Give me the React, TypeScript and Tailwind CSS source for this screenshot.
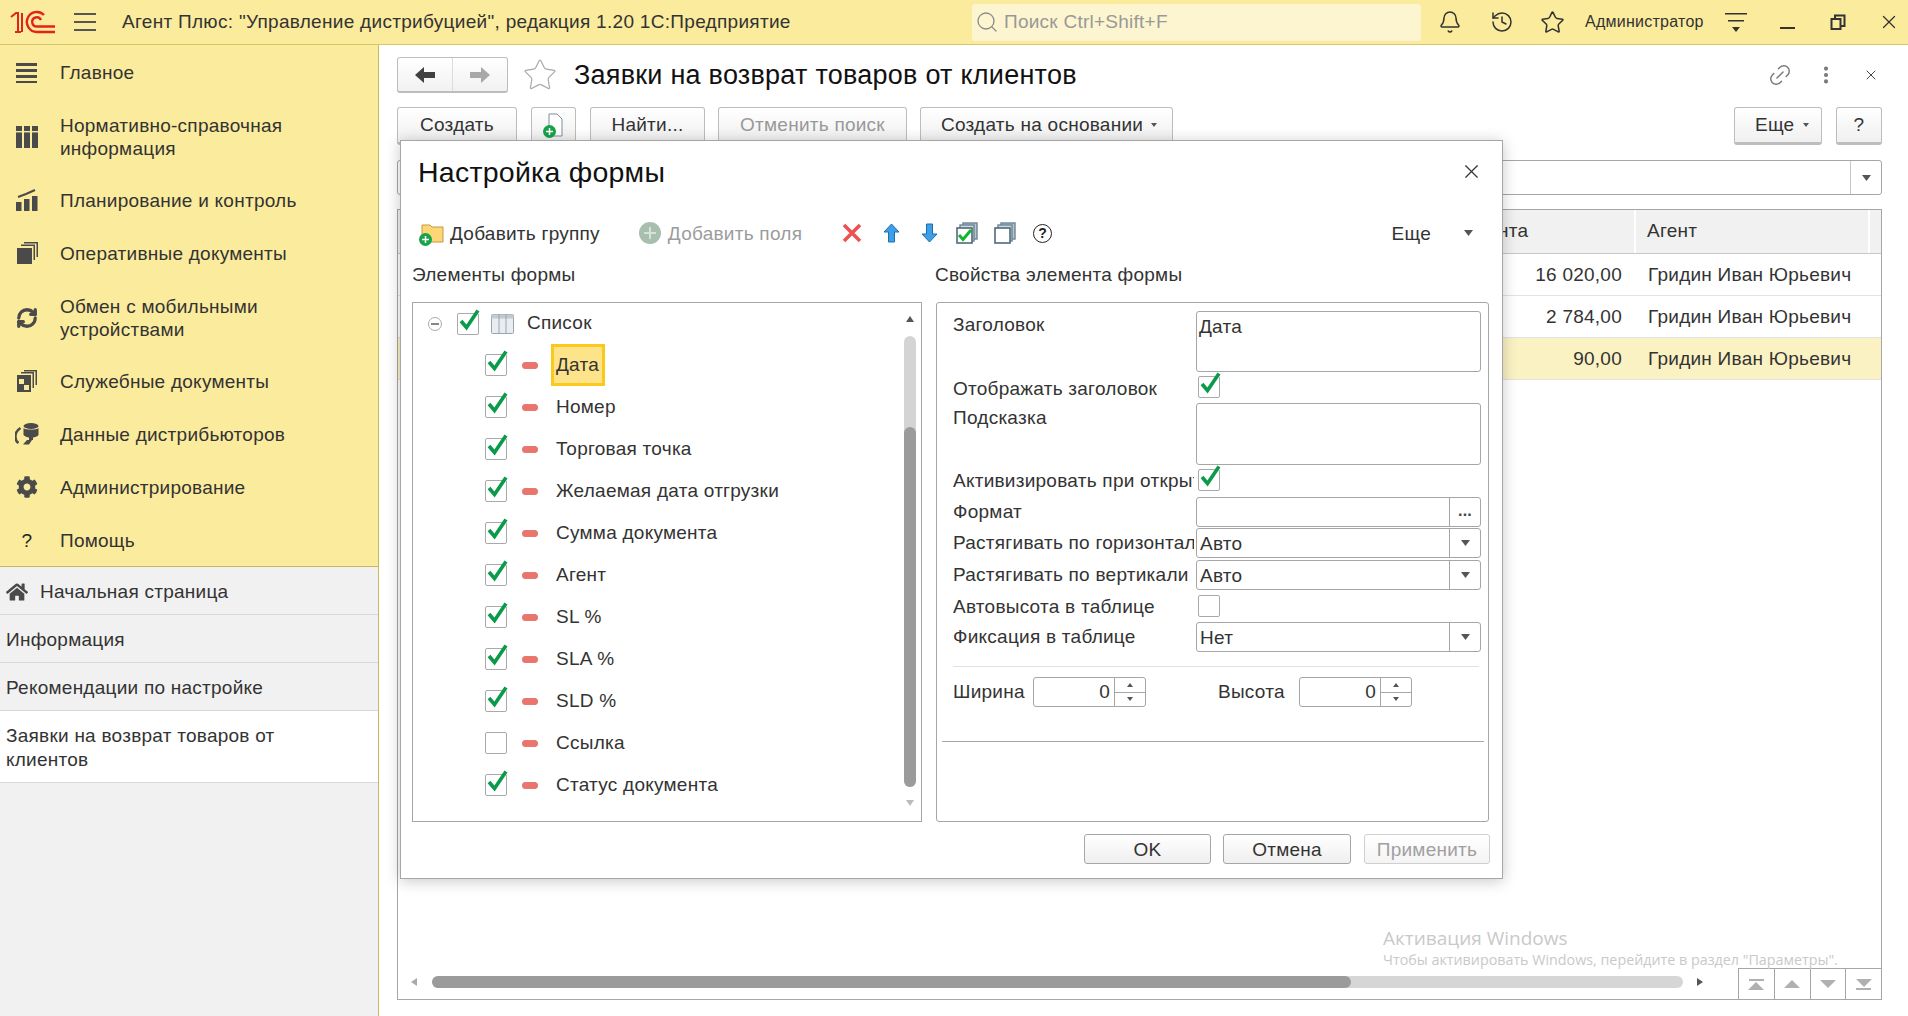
import { ReactNode } from 'react';
import { Bell, History, Star, X, Link2, EllipsisVertical, Search, RefreshCw } from 'lucide-react';
import { FaCog, FaHome } from 'react-icons/fa';

function Logo1C() {
    return (
        <svg width="46" height="24" viewBox="0 0 46 24" fill="none" stroke="#e2231a" strokeWidth="2.4">
            <path d="M1 7 L6 3 H8 V22 M5 22 H11" strokeWidth="2" />
            <path d="M12 3 V22" strokeWidth="2" />
            <path d="M45 22 H27 A10 10 0 1 1 34 5" />
            <path d="M45 16.5 H27 A4.6 4.6 0 1 1 31 10" />
        </svg>
    );
}

function MenuIcon({ name }: { name: string }) {
    const c = '#4a4a4a';
    if (name === 'main') {
        return (
            <svg width="22" height="22" viewBox="0 0 22 22" fill={c}>
                <rect x="0" y="2" width="21" height="3" />
                <rect x="0" y="8" width="21" height="3" />
                <rect x="0" y="14" width="21" height="3" />
                <rect x="0" y="20" width="21" height="2.5" />
            </svg>
        );
    }
    if (name === 'ref') {
        return (
            <svg width="22" height="22" viewBox="0 0 22 22" fill={c}>
                <rect x="0" y="0" width="6" height="22" />
                <rect x="8" y="0" width="6" height="22" />
                <rect x="16" y="0" width="6" height="22" />
                <rect x="0" y="5" width="22" height="1.4" fill="#faea9b" />
            </svg>
        );
    }
    if (name === 'plan') {
        return (
            <svg width="22" height="22" viewBox="0 0 22 22" fill={c}>
                <rect x="0" y="13" width="5.5" height="9" />
                <rect x="8" y="10" width="5.5" height="12" />
                <rect x="16" y="7" width="5.5" height="15" />
                <path d="M2 8 L10 5 L19 1" stroke={c} strokeWidth="2" fill="none" />
            </svg>
        );
    }
    if (name === 'docs') {
        return (
            <svg width="22" height="22" viewBox="0 0 22 22" fill={c}>
                <rect x="1" y="6" width="15" height="16" />
                <path d="M5 4 V2.5 H19 V18 H17.5 V4 Z" />
                <path d="M8 1.5 V0 H22 V15 H20.5 V1.5 Z" />
            </svg>
        );
    }
    if (name === 'sync') {
        return <RefreshCw size={22} color={c} strokeWidth={3.6} />;
    }
    if (name === 'service') {
        return (
            <svg width="20" height="22" viewBox="0 0 20 22" fill={c}>
                <rect x="0" y="5" width="14" height="17" />
                <rect x="2" y="9" width="5" height="5" fill="#faea9b" />
                <rect x="7" y="15" width="5" height="5" fill="#faea9b" />
                <path d="M4 3.5 V2 H17 V18 H15.5 V3.5 Z" />
                <path d="M7 1.5 V0 H20 V15 H18.5 V1.5 Z" />
            </svg>
        );
    }
    if (name === 'data') {
        return (
            <svg width="24" height="22" viewBox="0 0 24 22" fill={c}>
                <ellipse cx="16" cy="3" rx="7.5" ry="3" />
                <path d="M8.5 5 C10 7 22 7 23.5 5 V12 C22 14 18 14.5 18 14.5 V17 H14 V14.5 C12 14.5 10 13.5 8.5 12 Z" />
                <path d="M5.5 5 C-1 9 -1 17 3.5 20" stroke={c} strokeWidth="2.6" fill="none" />
                <path d="M8 21.5 L12 17 H17 L14 21.5 Z" />
            </svg>
        );
    }
    if (name === 'admin') {
        return <FaCog size={22} color={c} />;
    }
    return <span className="text-[19px] leading-none text-[#222]">?</span>;
}

const menu = [
    { icon: 'main', label: 'Главное' },
    { icon: 'ref', label: 'Нормативно-справочная информация', two: true },
    { icon: 'plan', label: 'Планирование и контроль' },
    { icon: 'docs', label: 'Оперативные документы' },
    { icon: 'sync', label: 'Обмен с мобильными устройствами', two: true },
    { icon: 'service', label: 'Служебные документы' },
    { icon: 'data', label: 'Данные дистрибьюторов' },
    { icon: 'admin', label: 'Администрирование' },
    { icon: 'help', label: 'Помощь' },
];

function Sidebar() {
    return (
        <div className="flex w-[379px] shrink-0 flex-col border-r border-[#c9b85f] bg-[#f1f1f1]">
            <div className="border-b border-[#c9b85f] bg-[#fbeb9c]">
                {menu.map(item => (
                    <div
                        key={item.icon}
                        className={`flex items-center ${item.two ? 'h-[75px] pt-[2px]' : 'h-[53px] pt-[1px]'}`}
                    >
                        <div className="flex w-[54px] shrink-0 justify-center">
                            <MenuIcon name={item.icon} />
                        </div>
                        <div className="ml-[6px] w-[300px] text-[19px] leading-[23px] text-[#333]">{item.label}</div>
                    </div>
                ))}
            </div>
            <div className="flex h-[48px] items-center gap-[12px] border-b border-[#d8d8d8] pl-[6px] pt-[3px] text-[19px] text-[#333]">
                <FaHome size={22} color="#4a4a4a" />
                Начальная страница
            </div>
            <div className="flex h-[48px] items-center border-b border-[#d8d8d8] pl-[6px] pt-[3px] text-[19px] text-[#333]">
                Информация
            </div>
            <div className="flex h-[48px] items-center border-b border-[#d8d8d8] pl-[6px] pt-[3px] text-[19px] text-[#333]">
                Рекомендации по настройке
            </div>
            <div className="flex h-[72px] items-center border-b border-[#d8d8d8] bg-white pl-[6px] pr-[40px] pt-[2px] text-[19px] leading-[24px] text-[#333]">
                Заявки на возврат товаров от клиентов
            </div>
        </div>
    );
}

function TopBar() {
    return (
        <div className="flex h-[45px] items-center border-b border-[#d8c56a] bg-[#fbeb9c] text-[#333]">
            <div className="ml-[10px] w-[46px]">
                <Logo1C />
            </div>
            <div className="ml-[18px] flex h-[18px] w-[22px] flex-col justify-between">
                <div className="h-[2px] bg-[#555]" />
                <div className="h-[2px] bg-[#555]" />
                <div className="h-[2px] bg-[#555]" />
            </div>
            <div className="ml-[26px] w-[850px] text-[19px] tracking-[0.3px]">
                Агент Плюс: "Управление дистрибуцией", редакция 1.20 1С:Предприятие
            </div>
            <div className="flex h-[37px] w-[449px] items-center rounded-[3px] bg-[#fcf5cf] pl-[3px] text-[19px] text-[#999]">
                <Search size={24} strokeWidth={1.3} color="#8a8a8a" />
                <span className="ml-[5px]">Поиск Ctrl+Shift+F</span>
            </div>
            <Bell size={24} strokeWidth={1.5} color="#333" className="ml-[17px]" />
            <History size={24} strokeWidth={1.5} color="#333" className="ml-[28px]" />
            <Star size={25} strokeWidth={1.5} color="#333" className="ml-[26px]" />
            <span className="ml-[20px] text-[16px]">Администратор</span>
            <svg width="22" height="24" viewBox="0 0 22 24" className="ml-[21px]" fill="#333">
                <rect x="0" y="3" width="22" height="1.5" />
                <rect x="3" y="10" width="16" height="1.5" />
                <path d="M7 17 H15 L11 22 Z" />
            </svg>
            <div className="ml-[33px] mt-[12px] h-[2px] w-[15px] bg-[#333]" />
            <svg width="16" height="16" viewBox="0 0 16 16" className="ml-[35px]" fill="none" stroke="#333" strokeWidth="2">
                <rect x="1.5" y="5" width="9" height="10" />
                <path d="M5 4 V1.5 H14.5 V12 H11" />
            </svg>
            <X size={22} strokeWidth={1.4} color="#333" className="ml-[32px]" />
        </div>
    );
}

function Btn({ children, disabled, className }: { children: ReactNode; disabled?: boolean; className?: string }) {
    return (
        <div
            className={`flex h-[38px] items-center rounded-[3px] border border-b-[3px] border-[#bdbdbd] bg-linear-to-b from-white to-[#f0f0f0] text-[19px] ${
                disabled ? 'text-[#999]' : 'text-[#333]'
            } ${className ?? 'justify-center'}`}
        >
            {children}
        </div>
    );
}

function Caret({ color = '#555', small }: { color?: string; small?: boolean }) {
    return (
        <svg width={small ? 6 : 9} height={small ? 4 : 6} viewBox="0 0 9 6" fill={color}>
            <path d="M0 0 H9 L4.5 6 Z" />
        </svg>
    );
}

function GreenPlus({ className }: { className?: string }) {
    return (
        <svg width="13" height="13" viewBox="0 0 13 13" className={className}>
            <circle cx="6.5" cy="6.5" r="6.5" fill="#17a34a" />
            <path d="M6.5 3 V10 M3 6.5 H10" stroke="#fff" strokeWidth="1.5" />
        </svg>
    );
}

function FrameTable() {
    const rows = [
        { sum: '16 020,00', active: false },
        { sum: '2 784,00', active: false },
        { sum: '90,00', active: true },
    ];
    return (
        <div className="relative flex h-[791px] flex-col border border-[#a6a6a6]">
            <div className="grid h-[44px] grid-cols-[971px_265px_236px_11px] border-b border-[#c8c8c8] bg-[#f1f1f1] text-[19px] text-[#333]">
                <div />
                <div className="-ml-[2px] flex items-center">Сумма документа</div>
                <div className="flex items-center border-l-2 border-r-2 border-white pl-[11px]">Агент</div>
                <div />
            </div>
            {rows.map(r => (
                <div
                    key={r.sum}
                    className={`grid h-[42px] grid-cols-[971px_265px_236px_11px] border-b border-[#e2e2e2] pt-[1px] text-[19px] text-[#333] ${
                        r.active ? 'bg-[#fbf2c4]' : ''
                    }`}
                >
                    <div />
                    <div className="flex items-center justify-end pr-[12px]">{r.sum}</div>
                    <div className="flex items-center pl-[14px]">Гридин Иван Юрьевич</div>
                    <div />
                </div>
            ))}
            <div className="flex-1" />
            <div className="flex h-[31px] items-start">
                <div className="flex w-[1340px] items-center pt-[8px] pl-[13px]">
                    <div className="h-0 w-0 border-y-[4px] border-r-[6px] border-y-transparent border-r-[#aaa]" />
                    <div className="ml-[15px] flex h-[12px] w-[1251px] rounded-full bg-[#d6d6d6]">
                        <div className="h-[12px] w-[919px] rounded-full bg-[#9b9b9b]" />
                    </div>
                    <div className="ml-[14px] h-0 w-0 border-y-[4px] border-l-[6px] border-y-transparent border-l-[#555]" />
                </div>
                <div className="flex h-[31px] flex-1">
                    {[0, 1, 2, 3].map(i => (
                        <div key={i} className="flex flex-1 flex-col items-center justify-center gap-[1px] border-l border-t border-[#a6a6a6]">
                            {i === 0 && <div className="h-[2px] w-[15px] bg-[#b0b0b0]" />}
                            {i < 2 ? (
                                <div className="h-0 w-0 border-x-[8px] border-b-[8px] border-x-transparent border-b-[#b0b0b0]" />
                            ) : (
                                <div className="h-0 w-0 border-x-[8px] border-t-[8px] border-x-transparent border-t-[#b0b0b0]" />
                            )}
                            {i === 3 && <div className="h-[2px] w-[15px] bg-[#b0b0b0]" />}
                        </div>
                    ))}
                </div>
            </div>
            <div className="absolute bottom-[29px] left-[985px] tracking-normal text-[#c9c9c9]">
                <div className="font-['Open_Sans',sans-serif] text-[19px] leading-[24px]">Активация Windows</div>
                <div className="font-['Open_Sans',sans-serif] text-[14.3px] leading-[20px] whitespace-nowrap">
                    Чтобы активировать Windows, перейдите в раздел "Параметры".
                </div>
            </div>
        </div>
    );
}

function CheckBox({ checked }: { checked?: boolean }) {
    return (
        <div className="h-[22px] w-[22px] shrink-0 rounded-[2px] border border-[#a9a9a9] bg-white">
            {checked && (
                <svg width="22" height="26" viewBox="0 0 22 26" className="-mt-[5px] overflow-visible">
                    <path d="M3 12 L8.5 18.5 L20 1.5" fill="none" stroke="#0a9a4a" strokeWidth="3.6" />
                </svg>
            )}
        </div>
    );
}

function RedMinus() {
    return <div className="h-[7px] w-[16px] shrink-0 rounded-[3px] border border-[#e57a73] bg-[#e9756c]" />;
}

const treeItems: { label: string; checked: boolean }[] = [
    { label: 'Дата', checked: true },
    { label: 'Номер', checked: true },
    { label: 'Торговая точка', checked: true },
    { label: 'Желаемая дата отгрузки', checked: true },
    { label: 'Сумма документа', checked: true },
    { label: 'Агент', checked: true },
    { label: 'SL %', checked: true },
    { label: 'SLA %', checked: true },
    { label: 'SLD %', checked: true },
    { label: 'Ссылка', checked: false },
    { label: 'Статус документа', checked: true },
];

function Tree() {
    return (
        <div className="relative h-[520px] w-[510px] border border-[#a6a6a6] text-[19px] text-[#333]">
            <div className="flex h-[41px] items-center">
                <div className="ml-[15px] flex h-[14px] w-[14px] items-center justify-center rounded-full border border-[#aaa]">
                    <div className="h-[2px] w-[8px] bg-[#888]" />
                </div>
                <div className="ml-[15px]">
                    <CheckBox checked />
                </div>
                <svg width="23" height="20" viewBox="0 0 23 20" className="ml-[12px]">
                    <rect x="0.5" y="0.5" width="22" height="19" rx="1" fill="#e9edf1" stroke="#9aa4ad" />
                    <rect x="0.5" y="0.5" width="22" height="4" fill="#c3cad1" />
                    <path d="M8 0 V20 M15 0 V20" stroke="#9aa4ad" />
                </svg>
                <span className="ml-[13px]">Список</span>
            </div>
            {treeItems.map((item, i) => (
                <div key={item.label} className="flex h-[42px] items-center pl-[72px]">
                    <CheckBox checked={item.checked} />
                    <div className="ml-[15px]">
                        <RedMinus />
                    </div>
                    <div
                        className={`ml-[13px] flex h-[42px] items-center border-[3px] pl-[2px] pr-[3px] ${
                            i === 0 ? 'border-[#fbc81c] bg-[#fde38a]' : 'border-transparent'
                        }`}
                    >
                        {item.label}
                    </div>
                </div>
            ))}
            <div className="absolute right-[5px] top-[33px] flex h-[451px] w-[12px] flex-col rounded-full bg-[#d4d4d4]">
                <div className="mt-[91px] w-[12px] flex-1 rounded-full bg-[#9b9b9b]" />
            </div>
            <div className="absolute right-[7px] top-[13px] h-0 w-0 border-x-[4px] border-b-[6px] border-x-transparent border-b-[#555]" />
            <div className="absolute bottom-[15px] right-[7px] h-0 w-0 border-x-[4px] border-t-[6px] border-x-transparent border-t-[#bbb]" />
        </div>
    );
}

function Label({ children, className }: { children: ReactNode; className?: string }) {
    return <div className={`mr-[2px] w-[241px] shrink-0 overflow-hidden whitespace-nowrap text-[19px] leading-[22px] ${className ?? ''}`}>{children}</div>;
}

function Field({ label, value, btn }: { label: string; value?: string; btn: ReactNode }) {
    return (
        <div className="flex h-[30px] items-center">
            <Label>{label}</Label>
            <div className="flex h-[30px] w-[285px] items-center rounded-[3px] border border-[#a6a6a6] pl-[3px]">
                <div className="flex-1 pt-[2px] text-[19px]">{value}</div>
                <div className="flex h-full w-[31px] items-center justify-center border-l border-[#a6a6a6]">{btn}</div>
            </div>
        </div>
    );
}

function Spin({ className }: { className?: string }) {
    return (
        <div className={`flex h-[30px] w-[113px] items-center rounded-[3px] border border-[#a6a6a6] ${className ?? ''}`}>
            <div className="flex-1 pr-[4px] pt-px text-right text-[19px]">0</div>
            <div className="flex h-full w-[31px] flex-col border-l border-[#a6a6a6]">
                <div className="flex flex-1 items-center justify-center border-b border-[#a6a6a6]">
                    <div className="h-0 w-0 border-x-[3px] border-b-[4px] border-x-transparent border-b-[#555]" />
                </div>
                <div className="flex flex-1 items-center justify-center">
                    <div className="h-0 w-0 border-x-[3px] border-t-[4px] border-x-transparent border-t-[#555]" />
                </div>
            </div>
        </div>
    );
}

function Props() {
    return (
        <div className="h-[520px] w-[553px] rounded-[3px] border border-[#a6a6a6] text-[#333]">
            <div className="pl-[16px]">
                <div className="mt-[8px] flex h-[61px]">
                    <Label className="pt-[3px]">Заголовок</Label>
                    <div className="h-[61px] w-[285px] rounded-[3px] border border-[#a6a6a6] pl-[2px] pt-px text-[19px]">Дата</div>
                </div>
                <div className="mt-[4px] flex h-[22px] items-center">
                    <Label className="pt-[3px]">Отображать заголовок</Label>
                    <div className="ml-[2px]">
                        <CheckBox checked />
                    </div>
                </div>
                <div className="mt-[5px] flex h-[62px]">
                    <Label className="pt-[4px]">Подсказка</Label>
                    <div className="h-[62px] w-[285px] rounded-[3px] border border-[#a6a6a6]" />
                </div>
                <div className="mt-[4px] flex h-[22px] items-center">
                    <Label className="pt-[2px]">Активизировать при открытии</Label>
                    <div className="ml-[2px]">
                        <CheckBox checked />
                    </div>
                </div>
                <div className="mt-[6px]">
                    <Field label="Формат" btn={<span className="-mt-[2px] text-[16px] font-bold leading-none text-[#444]">...</span>} />
                </div>
                <div className="mt-[1px]">
                    <Field label="Растягивать по горизонтали" value="Авто" btn={<Caret />} />
                </div>
                <div className="mt-[2px]">
                    <Field label="Растягивать по вертикали" value="Авто" btn={<Caret />} />
                </div>
                <div className="mt-[5px] flex h-[22px] items-center">
                    <Label className="pt-[2px]">Автовысота в таблице</Label>
                    <div className="ml-[2px]">
                        <CheckBox />
                    </div>
                </div>
                <div className="mt-[5px]">
                    <Field label="Фиксация в таблице" value="Нет" btn={<Caret />} />
                </div>
                <div className="mr-[9px] mt-[14px] h-px bg-[#e2e2e2]" />
                <div className="mt-[10px] flex h-[30px] items-center text-[19px]">
                    <span className="w-[80px] pt-px">Ширина</span>
                    <Spin />
                    <span className="ml-[72px] w-[81px] pt-px">Высота</span>
                    <Spin />
                </div>
            </div>
            <div className="ml-[5px] mr-[4px] mt-[34px] h-px bg-[#a6a6a6]" />
        </div>
    );
}

function SettingsDialog() {
    return (
        <div className="absolute left-[400px] top-[140px] h-[739px] w-[1103px] border border-[#a6a6a6] bg-white text-[#333] shadow-[0_2px_14px_rgba(0,0,0,0.22)]">
            <div className="flex h-[70px] items-start justify-between pl-[17px] pr-[19px] pt-[15px]">
                <div className="text-[28.5px] leading-[32px] text-[#111]">Настройка формы</div>
                <X size={23} strokeWidth={1.2} color="#333" className="mt-[4px]" />
            </div>
            <div className="mt-[6px] flex h-[32px] items-center pl-[19px] pr-[29px] text-[19px]">
                <div className="relative h-[22px] w-[24px]">
                    <svg width="24" height="22" viewBox="0 0 24 22">
                        <path d="M2 3 H10 L12 5 H23 V20 H2 Z" fill="#fbd777" stroke="#c9973a" />
                    </svg>
                    <GreenPlus className="absolute bottom-[-2px] left-[-1px]" />
                </div>
                <span className="ml-[6px] pt-[2px]">Добавить группу</span>
                <svg width="22" height="22" viewBox="0 0 22 22" className="ml-[39px]">
                    <circle cx="11" cy="11" r="11" fill="#a9bfae" />
                    <path d="M11 5 V17 M5 11 H17" stroke="#d8e2da" strokeWidth="2" />
                </svg>
                <span className="ml-[7px] pt-[2px] text-[#9c9c9c]">Добавить поля</span>
                <svg width="20" height="20" viewBox="0 0 20 20" className="ml-[40px]">
                    <path d="M2 2 L18 18 M18 2 L2 18" stroke="#ee4f4f" strokeWidth="3.5" />
                </svg>
                <svg width="17" height="20" viewBox="0 0 17 20" className="ml-[21px]">
                    <path d="M8.5 1 L16 9 H11.5 V19 H5.5 V9 H1 Z" fill="#3f9fe6" stroke="#1a6fad" />
                </svg>
                <svg width="17" height="20" viewBox="0 0 17 20" className="ml-[21px]">
                    <path d="M8.5 19 L16 11 H11.5 V1 H5.5 V11 H1 Z" fill="#3f9fe6" stroke="#1a6fad" />
                </svg>
                <svg width="22" height="22" viewBox="0 0 22 22" className="ml-[18px]">
                    <rect x="7" y="1" width="14" height="16" fill="#b8c6ce" stroke="#6c8494" strokeWidth="1.4" />
                    <rect x="4" y="3" width="14" height="16" fill="#cfdae0" stroke="#6c8494" strokeWidth="1.4" />
                    <rect x="1" y="6" width="15" height="15" fill="#fff" stroke="#4e6a7b" strokeWidth="1.6" />
                    <path d="M3 13 L7 17.5 L15 8" fill="none" stroke="#13b52a" strokeWidth="3" />
                </svg>
                <svg width="22" height="22" viewBox="0 0 22 22" className="ml-[16px]">
                    <rect x="7" y="1" width="14" height="16" fill="#b8c6ce" stroke="#6c8494" strokeWidth="1.4" />
                    <rect x="4" y="3" width="14" height="16" fill="#cfdae0" stroke="#6c8494" strokeWidth="1.4" />
                    <rect x="1" y="6" width="15" height="15" fill="#fff" stroke="#4e6a7b" strokeWidth="1.6" />
                </svg>
                <div className="ml-[17px] flex h-[19px] w-[19px] items-center justify-center rounded-full border-[1.5px] border-[#222] text-[14px] font-bold leading-none text-[#222]">
                    ?
                </div>
                <div className="flex-1" />
                <span className="pt-[2px]">Еще</span>
                <div className="ml-[33px]">
                    <Caret color="#555" />
                </div>
            </div>
            <div className="mt-[15px] flex h-[22px] items-center gap-[14px] pl-[11px] text-[19px] leading-[22px]">
                <div className="w-[510px]">Элементы формы</div>
                <div className="-ml-[1px]">Свойства элемента формы</div>
            </div>
            <div className="mt-[16px] flex gap-[14px] pl-[11px]">
                <Tree />
                <Props />
            </div>
            <div className="mt-[12px] flex justify-end gap-[12px] pr-[12px] text-[19px]">
                <div className="flex h-[30px] w-[127px] items-center justify-center rounded-[3px] border border-[#a6a6a6] bg-linear-to-b from-white to-[#efefef] pt-[2px]">OK</div>
                <div className="mr-px flex h-[30px] w-[128px] items-center justify-center rounded-[3px] border border-[#a6a6a6] bg-linear-to-b from-white to-[#efefef] pt-[2px]">Отмена</div>
                <div className="flex h-[30px] w-[126px] items-center justify-center rounded-[3px] border border-[#cfcfcf] bg-linear-to-b from-white to-[#f4f4f4] pt-[2px] text-[#a0a0a0]">Применить</div>
            </div>
        </div>
    );
}

export default function App() {
    return (
        <div className="relative flex h-[1016px] w-[1908px] flex-col overflow-hidden bg-white font-['Liberation_Sans',Arial,sans-serif] tracking-[0.25px]">
            <TopBar />
            <div className="flex flex-1">
                <Sidebar />
                <div className="flex-1 pl-[18px] pr-[26px] pt-[12px]">
                    <div className="flex h-[36px] items-center">
                        <div className="flex h-[36px] w-[111px] rounded-[3px] border border-b-2 border-[#bdbdbd] bg-linear-to-b from-white to-[#f1f1f1]">
                            <div className="flex flex-1 items-center justify-center border-r border-[#dcdcdc]">
                                <svg width="20" height="16" viewBox="0 0 20 16" fill="#404040">
                                    <path d="M0 8 L9 0 V5 H20 V11 H9 V16 Z" />
                                </svg>
                            </div>
                            <div className="flex flex-1 items-center justify-center">
                                <svg width="20" height="16" viewBox="0 0 20 16" fill="#a8a8a8">
                                    <path d="M20 8 L11 0 V5 H0 V11 H11 V16 Z" />
                                </svg>
                            </div>
                        </div>
                        <Star size={36} strokeWidth={0.8} color="#a9a9a9" className="ml-[14px]" />
                        <div className="ml-[16px] flex-1 text-[27px] text-[#111]">Заявки на возврат товаров от клиентов</div>
                        <Link2 size={26} strokeWidth={1.3} color="#777" className="-rotate-45" />
                        <EllipsisVertical size={22} strokeWidth={2.5} color="#777" className="ml-[22px]" />
                        <X size={16} strokeWidth={1.5} color="#444" className="ml-[26px] mr-[3px]" />
                    </div>
                    <div className="mt-[14px] flex items-start">
                        <Btn className="w-[120px] justify-center">Создать</Btn>
                        <Btn className="ml-[14px] w-[45px] justify-center">
                            <div className="relative h-[24px] w-[18px]">
                                <svg width="18" height="24" viewBox="0 0 18 24">
                                    <path d="M4 1 H12 L17 6 V23 H4 Z" fill="#fff" stroke="#7d8f9c" />
                                </svg>
                                <GreenPlus className="absolute bottom-[-1px] left-[-2px]" />
                            </div>
                        </Btn>
                        <Btn className="ml-[14px] w-[115px] justify-center">Найти...</Btn>
                        <Btn className="ml-[13px] w-[189px] justify-center" disabled>
                            Отменить поиск
                        </Btn>
                        <Btn className="ml-[13px] w-[253px] gap-[8px] pl-[20px]">
                            Создать на основании <Caret small />
                        </Btn>
                        <div className="flex-1" />
                        <Btn className="w-[88px] gap-[9px] pl-[20px]">
                            Еще <Caret small />
                        </Btn>
                        <Btn className="ml-[14px] w-[46px] justify-center">?</Btn>
                    </div>
                    <div className="mt-[15px] flex h-[35px] items-center justify-end rounded-[3px] border border-[#a6a6a6]">
                        <div className="flex h-full w-[31px] items-center justify-center border-l border-[#c8c8c8]">
                            <Caret />
                        </div>
                    </div>
                    <div className="mt-[14px]">
                        <FrameTable />
                    </div>
                </div>
            </div>
            <SettingsDialog />
        </div>
    );
}
